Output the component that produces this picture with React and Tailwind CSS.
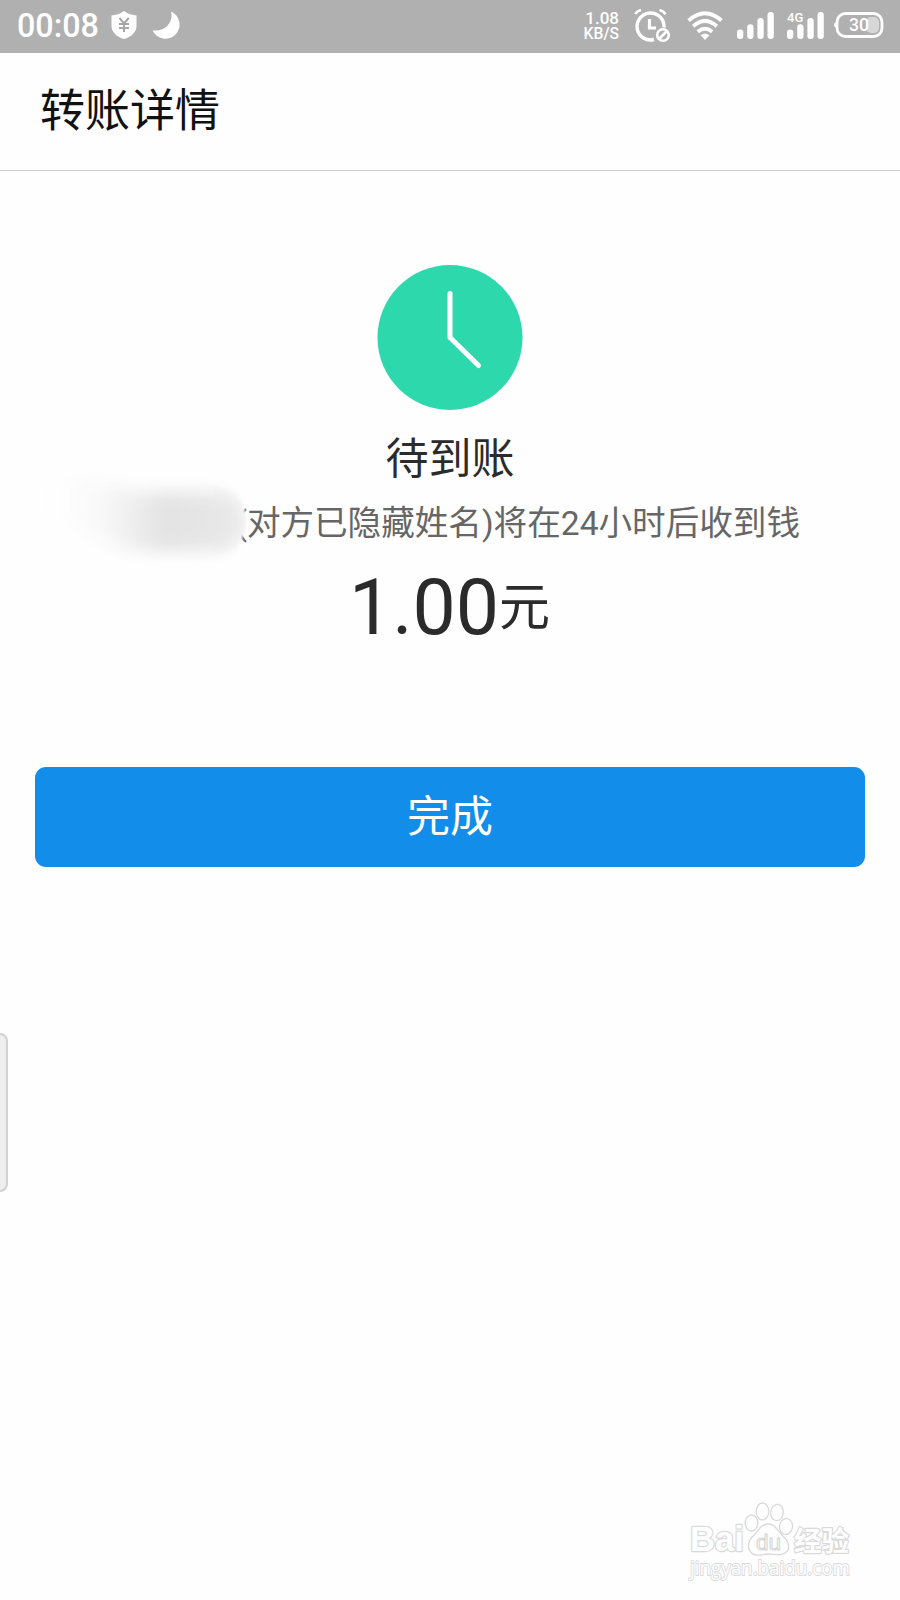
function Shield() {
  return (
    <svg width="26" height="28" viewBox="0 0 26 28" className="ml-[13px]">
      <path d="M13 0C9 3 4.500 4.200 0.500 4.500V15C0.500 21 6 26.300 13 28C20 26.300 25.500 21 25.500 15V4.500C21.500 4.200 17 3 13 0Z" fill="#fff" />
      <path d="M8.500 7L13 12.500L17.700 7M8 13H18M8 17H18M13 12.500V21" stroke="#a6a6a6" strokeWidth="2" fill="none" />
    </svg>
  );
}

function Moon() {
  return (
    <svg width="29" height="29" viewBox="0 0 29 29" className="ml-[15px]">
      <path d="M19 .5A14.200 14.200 0 1 1 .5 19.500C7 20 12.500 18.500 16 14C19.500 10 20.300 5 19 .5Z" fill="#fff" />
    </svg>
  );
}

function Alarm() {
  return (
    <svg width="37" height="34" viewBox="0 0 37 34" fill="none" stroke="#fff" className="ml-[15px]">
      <path d="M20 30.500A13.500 13.500 0 1 1 30 18.500" strokeWidth="3.400" />
      <path d="M15.500 10V19H22" strokeWidth="3.200" />
      <path d="M1.200 5.200Q3 2 7 1M25.500 1Q29.500 2 31.500 5.200" strokeWidth="2.600" />
      <circle cx="29" cy="26" r="5.800" strokeWidth="2.600" />
      <path d="M25 30L33 22" strokeWidth="2.600" />
    </svg>
  );
}

function Wifi() {
  return (
    <svg width="36" height="30" viewBox="0 0 36 30" fill="none" stroke="#fff" strokeWidth="3.800" className="ml-[16px]">
      <path d="M1.500 9.500Q18 -5.200 34.500 9.500" />
      <path d="M6.200 15.200Q18 4.800 29.800 15.200" />
      <path d="M10.800 20.700Q18 14.800 25.200 20.700" />
      <path d="M13.500 24.300Q18 20.800 22.500 24.300L18 29Z" fill="#fff" stroke="none" />
    </svg>
  );
}

function Bars() {
  return (
    <svg width="37" height="27" viewBox="0 0 37 27" fill="#fff">
      <rect x="0" y="17.500" width="6.300" height="9.500" rx="3" />
      <rect x="10.200" y="12.300" width="6.300" height="14.700" rx="3" />
      <rect x="20.400" y="6" width="6.300" height="21" rx="3" />
      <rect x="30.500" y="0" width="6.300" height="27" rx="3" />
    </svg>
  );
}

function Battery() {
  return (
    <svg width="51" height="27" viewBox="0 0 51 27" className="ml-[9px]">
      <path d="M5 8.500L1.500 11.500Q0 13 1.500 14.500L5 17.500Z" fill="#fff" />
      <rect x="33" y="5" width="13" height="16" rx="5" fill="#d7d7d7" />
      <rect x="4" y="1.500" width="45" height="23" rx="8.500" fill="none" stroke="#fff" strokeWidth="2.800" />
      <text x="26" y="19.300" textAnchor="middle" fill="#fff" fontFamily="Roboto" fontWeight="500" fontSize="17.500">30</text>
    </svg>
  );
}

function StatusBar() {
  return (
    <div className="flex h-[53px] items-center justify-between bg-[#b0b0b0] pr-[16px] pb-[2px] pl-[17px] text-white">
      <div className="flex items-center">
        <span className="w-[81px] pt-px text-[32.3px] leading-none font-medium whitespace-nowrap">00:08</span>
        <Shield />
        <Moon />
      </div>
      <div className="flex items-center">
        <div className="flex flex-col items-end font-medium">
          <span className="text-[17px] leading-[15px]">1.08</span>
          <span className="text-[15.7px] leading-[15px]">KB/S</span>
        </div>
        <Alarm />
        <Wifi />
        <div className="ml-[14px] flex"><Bars /></div>
        <div className="relative ml-[13px] flex">
          <Bars />
          <span className="absolute top-[-1px] left-0 text-[13px] leading-[13px] font-medium">4G</span>
        </div>
        <Battery />
      </div>
    </div>
  );
}

function Watermark() {
  return (
    <svg width="180" height="92" viewBox="0 0 180 92" className="mt-auto mr-[46px] mb-[15px] ml-auto">
      <g fill="#fefefe" stroke="#dadada" strokeLinejoin="round" style={{ paintOrder: "stroke" }}>
        <text x="16" y="58" textLength="54" lengthAdjust="spacingAndGlyphs" fontFamily="'Liberation Sans'" fontWeight="700" fontSize="35" strokeWidth="2.400">Bai</text>
        <text x="120" y="57.500" fontFamily="'Noto Sans CJK SC'" fontWeight="700" fontSize="27.500" strokeWidth="2.400">经验</text>
        <text x="16" y="81.500" textLength="160" lengthAdjust="spacingAndGlyphs" fontFamily="'Open Sans'" fontSize="20" strokeWidth="1.800">jingyan.baidu.com</text>
      </g>
      <g fill="#fefefe" stroke="#dadada" strokeWidth="1.300">
        <ellipse cx="77.500" cy="30" rx="6.300" ry="8" />
        <ellipse cx="88.500" cy="18.500" rx="6.300" ry="8.500" />
        <ellipse cx="103" cy="19.500" rx="6.300" ry="8.200" transform="rotate(8 103 19.500)" />
        <ellipse cx="112" cy="33.500" rx="6.500" ry="8" transform="rotate(8 112 33.500)" />
        <path d="M94 31C87 31 85 37 80 42C75 47 73 53 76 58C80 65 88 61 95 61C102 61 110 64 114 57C116 50 112 46 108 42C103 37 101 31 94 31Z" />
      </g>
      <text x="82" y="56.500" textLength="25" lengthAdjust="spacingAndGlyphs" fontFamily="'Liberation Sans'" fontSize="22" fill="#fefefe" stroke="#d4d4d4" strokeWidth="1">du</text>
    </svg>
  );
}

export default function App() {
  return (
    <div lang="zh-CN" className="relative flex h-[1600px] w-[900px] flex-col overflow-hidden bg-[#fefefe] font-[Roboto,'Noto_Sans_CJK_SC',sans-serif]">
      <StatusBar />
      <header className="flex h-[118px] items-center border-b border-[#cdcdcd] pl-[40px]">
        <h1 className="text-[45px] leading-[60px] text-[#111]">转账详情</h1>
      </header>
      <main className="flex flex-col items-center">
        <svg width="146" height="146" viewBox="0 0 146 146" className="mt-[94px]">
          <circle cx="73" cy="72.500" r="72.500" fill="#2ed8ad" />
          <path d="M73 28.500V72.500L101.500 100.500" fill="none" stroke="#fff" strokeWidth="5" strokeLinecap="round" strokeLinejoin="round" />
        </svg>
        <h2 className="mt-[18px] text-[43px] leading-[60px] text-[#2b2b2b]">待到账</h2>
        <div className="relative mt-[11px] flex h-[48px] w-full justify-end pr-[100px] text-[33.6px] leading-[48px] whitespace-nowrap text-[#666]">
          <span>(对方已隐藏姓名)将在24小时后收到钱</span>
          <svg width="250" height="130" viewBox="0 0 250 130" className="absolute top-[-44px] left-[35px]">
            <defs>
              <linearGradient id="smudge" x1="0" x2="1" y1="0" y2="0">
                <stop offset="0" stopColor="#fdfdfd" />
                <stop offset="0.220" stopColor="#f8f8f8" />
                <stop offset="0.550" stopColor="#e3e3e3" />
                <stop offset="1" stopColor="#e9e9e9" />
              </linearGradient>
              <filter id="soft" x="-20%" y="-40%" width="140%" height="180%"><feGaussianBlur stdDeviation="8" /></filter>
              <filter id="edge" x="-10%" y="-10%" width="120%" height="120%"><feGaussianBlur stdDeviation="1" /></filter>
              <mask id="cap" maskUnits="userSpaceOnUse" x="0" y="0" width="250" height="130">
                <path d="M-10 -10H60L110 22H178C222 22 222 108 178 108H100L60 140H-10Z" fill="#fff" filter="url(#edge)" />
              </mask>
            </defs>
            <path d="M178 32C222 32 222 98 178 98Z" fill="#fafafa" filter="url(#edge)" />
            <g mask="url(#cap)">
              <path d="M30 26Q60 20 100 36H175C221 36 221 95 175 95H105Q50 84 30 62Z" fill="url(#smudge)" filter="url(#soft)" />
            </g>
          </svg>
        </div>
        <div className="mt-[13px] flex h-[94px] items-center pr-px text-[#2b2b2b]">
          <span className="text-[77px] leading-[94px]">1.00</span>
          <span className="text-[51px] leading-[60px]">元</span>
        </div>
        <button className="mt-[112px] flex h-[100px] w-[830px] items-center justify-center rounded-[11px] bg-[#128dea] text-[43px] leading-[60px] text-white">完成</button>
      </main>
      <Watermark />
      <div className="absolute top-[1033px] left-[-12px] h-[159px] w-[20px] rounded-[8px] border-2 border-[#d2d2d2] bg-[#eee]" />
    </div>
  );
}
